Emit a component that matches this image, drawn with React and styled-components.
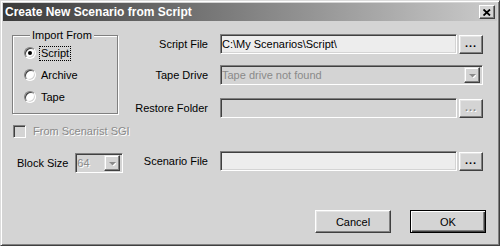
import React from 'react';
import styled, { createGlobalStyle } from 'styled-components';

const GlobalStyle = createGlobalStyle`
  html, body {
    margin: 0;
    padding: 0;
    background: #d4d4d4;
  }
`

const Window = styled.div`
  width: 500px;
  height: 246px;
  box-sizing: border-box;
  background: #d4d4d4;
  border: 1px solid;
  border-color: #dcdcdc #404040 #404040 #dcdcdc;
  box-shadow: inset 1px 1px #fff, inset -1px -1px #808080;
  padding: 2px;
  display: flex;
  flex-direction: column;
  font-family: "Liberation Sans", Arial, sans-serif;
  font-size: 11px;
  color: #000;
`
const TitleBar = styled.div`
  height: 18px;
  display: flex;
  align-items: center;
  justify-content: space-between;
  padding: 0 2px 0 2px;
  background: linear-gradient(to right, #3a3a3a, #cbcbcb);
  color: #fff;
  font-weight: bold;
  font-size: 12px;
`
const CloseButton = styled.div`
  width: 16px;
  height: 14px;
  box-sizing: border-box;
  background: #d4d4d4;
  border: 1px solid;
  border-color: #fff #404040 #404040 #fff;
  box-shadow: inset -1px -1px #808080;
  display: flex;
  align-items: center;
  justify-content: center;
`
const Body = styled.div`
  display: flex;
  padding-top: 8px;
`
const LeftColumn = styled.div`
  width: 110px;
  flex-shrink: 0;
  margin-left: 9px;
  display: flex;
  flex-direction: column;
  white-space: nowrap;
`
const RightColumn = styled.div`
  margin-left: 8px;
  padding-top: 5px;
  display: flex;
  flex-direction: column;
`
const GroupBox = styled.fieldset`
  width: 106px;
  box-sizing: border-box;
  margin: 0;
  padding: 0 0 5px 11px;
  min-width: 0;
  border: 1px solid #808080;
  box-shadow: inset 1px 1px #fff, 1px 1px #fff;
`
const Legend = styled.legend`
  margin-left: 6px;
  padding: 0 2px;
  line-height: 13px;
  background: #d4d4d4;
`
const RadioRow = styled.label`
  height: 22px;
  display: flex;
  align-items: center;
  gap: 4px;
`
const Radio = styled.span`
  position: relative;
  width: 12px;
  height: 12px;
  box-sizing: border-box;
  border-radius: 50%;
  background: #fff;
  border: 1px solid;
  border-color: #808080 #fff #fff #808080;
  box-shadow: inset 1px 1px #404040, inset -1px -1px #d4d4d4;

  &::after {
    content: '';
    display: ${props => (props.$checked ? 'block' : 'none')};
    position: absolute;
    left: 3px;
    top: 3px;
    width: 4px;
    height: 4px;
    border-radius: 50%;
    background: #000;
  }
`
const RadioText = styled.span`
  padding: 0 1px;
  line-height: 13px;
  outline: ${props => (props.$focused ? '1px dotted #000' : 'none')};
`
const CheckRow = styled.div`
  margin-top: 10px;
  margin-left: 1px;
  display: flex;
  align-items: center;
  gap: 7px;
  height: 14px;
`
const CheckBox = styled.span`
  width: 13px;
  height: 13px;
  flex-shrink: 0;
  box-sizing: border-box;
  background: #d4d4d4;
  border: 1px solid;
  border-color: #808080 #fff #fff #808080;
  box-shadow: inset 1px 1px #404040, inset -1px -1px #d4d4d4;
`
const DisabledText = styled.span`
  color: #8a8a8a;
  text-shadow: 1px 1px #fff;
  white-space: nowrap;
`
const BlockRow = styled.div`
  margin-top: 15px;
  margin-left: 5px;
  display: flex;
  align-items: center;
  gap: 7px;
`
const FieldRow = styled.div`
  margin-top: ${props => props.$top || 0}px;
  display: flex;
  align-items: center;
  height: 20px;
`
const Label = styled.span`
  width: 78px;
  margin-right: 12px;
  text-align: right;
  white-space: nowrap;
`
const Field = styled.div`
  width: ${props => props.$width || 237}px;
  height: 20px;
  flex-shrink: 0;
  box-sizing: border-box;
  padding: 0 2px 0 1px;
  display: flex;
  align-items: center;
  justify-content: space-between;
  background: ${props => (props.$enabled ? '#ededed' : '#d4d4d4')};
  color: ${props => (props.$enabled ? '#000' : '#8a8a8a')};
  border: 1px solid;
  border-color: #808080 #fff #fff #808080;
  box-shadow: inset 1px 1px #404040, inset -1px -1px #d4d4d4;
  white-space: nowrap;
  overflow: hidden;
`
const BrowseButton = styled.div`
  width: 24px;
  height: 19px;
  margin-left: 2px;
  box-sizing: border-box;
  background: #d4d4d4;
  border: 1px solid;
  border-color: #fff #404040 #404040 #fff;
  box-shadow: inset -1px -1px #808080, inset 1px 1px #e4e4e4;
  display: flex;
  align-items: center;
  justify-content: center;
  font-weight: bold;
  letter-spacing: 1px;
  padding-bottom: 3px;
  color: ${props => (props.$disabled ? '#8a8a8a' : '#000')};
  text-shadow: ${props => (props.$disabled ? '1px 1px #fff' : 'none')};
`
const DropButton = styled.div`
  width: 16px;
  height: 16px;
  flex-shrink: 0;
  box-sizing: border-box;
  background: #d4d4d4;
  border: 1px solid;
  border-color: #e4e4e4 #404040 #404040 #e4e4e4;
  box-shadow: inset -1px -1px #808080, inset 1px 1px #fff;
  display: flex;
  align-items: center;
  justify-content: center;
`
const Footer = styled.div`
  margin-top: auto;
  display: flex;
  justify-content: flex-end;
  gap: 19px;
  padding: 0 11px 10px 0;
`
const PushButton = styled.div`
  width: 76px;
  height: 23px;
  box-sizing: border-box;
  background: #d4d4d4;
  border: 1px solid;
  border-color: ${props => (props.$default ? '#000' : '#fff #404040 #404040 #fff')};
  box-shadow: ${props => (props.$default
    ? 'inset 1px 1px #fff, inset -1px -1px #404040, inset -2px -2px #808080'
    : 'inset -1px -1px #808080, inset 1px 1px #e4e4e4')};
  display: flex;
  align-items: center;
  justify-content: center;
`

const Arrow = () => (
  <svg width="7" height="5" viewBox="0 0 7 5">
    <path d="M1 2 L8 2 L4.5 5.5 Z" fill="#fff" />
    <path d="M0 1 L7 1 L3.5 4.5 Z" fill="#8a8a8a" />
  </svg>
)

const App = () => {
  return (
    <Window>
      <GlobalStyle />
      <TitleBar>
        <span>Create New Scenario from Script</span>
        <CloseButton>
          <svg width="8" height="7" viewBox="0 0 8 7">
            <path d="M0.5 0.5 L7 6.5 M7 0.5 L0.5 6.5" stroke="#000" strokeWidth="1.8" />
          </svg>
        </CloseButton>
      </TitleBar>
      <Body>
        <LeftColumn>
          <GroupBox>
            <Legend>Import From</Legend>
            <RadioRow>
              <Radio $checked />
              <RadioText $focused>Script</RadioText>
            </RadioRow>
            <RadioRow>
              <Radio />
              <RadioText>Archive</RadioText>
            </RadioRow>
            <RadioRow>
              <Radio />
              <RadioText>Tape</RadioText>
            </RadioRow>
          </GroupBox>
          <CheckRow>
            <CheckBox />
            <DisabledText>From Scenarist SGI</DisabledText>
          </CheckRow>
          <BlockRow>
            <span>Block Size</span>
            <Field $width={48}>
              <DisabledText>64</DisabledText>
              <DropButton><Arrow /></DropButton>
            </Field>
          </BlockRow>
        </LeftColumn>
        <RightColumn>
          <FieldRow>
            <Label>Script File</Label>
            <Field $enabled>C:\My Scenarios\Script\</Field>
            <BrowseButton>...</BrowseButton>
          </FieldRow>
          <FieldRow $top={11}>
            <Label>Tape Drive</Label>
            <Field $width={263}>
              <span>Tape drive not found</span>
              <DropButton><Arrow /></DropButton>
            </Field>
          </FieldRow>
          <FieldRow $top={13}>
            <Label>Restore Folder</Label>
            <Field />
            <BrowseButton $disabled>...</BrowseButton>
          </FieldRow>
          <FieldRow $top={33}>
            <Label>Scenario File</Label>
            <Field $enabled />
            <BrowseButton>...</BrowseButton>
          </FieldRow>
        </RightColumn>
      </Body>
      <Footer>
        <PushButton>Cancel</PushButton>
        <PushButton $default>OK</PushButton>
      </Footer>
    </Window>
  );
}

export default App;
